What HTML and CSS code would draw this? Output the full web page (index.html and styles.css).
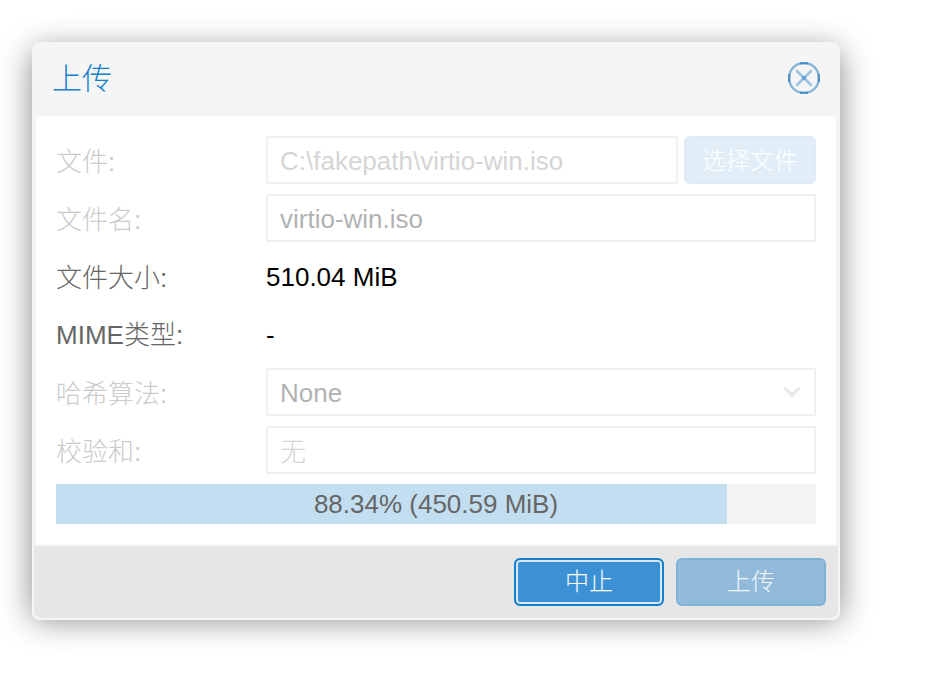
FILE: index.html
```html
<!DOCTYPE html>
<html lang="zh-CN">
<head>
<meta charset="utf-8">
<title>上传</title>
<link rel="stylesheet" href="styles.css">
</head>
<body>
<section class="window" role="dialog">
  <header class="header">
    <h1 class="title">上传</h1>
    <svg class="close" viewBox="0 0 32 32" fill="none"><circle cx="16" cy="16" r="15" stroke="#8ab6d8" stroke-width="2.6"/><path d="M12 1.2h8M12 30.8h8M1.2 12v8M30.8 12v8" stroke="#468fc5" stroke-width="2"/><path d="M9 9l14 14M23 9L9 23" stroke="#9cc2e4" stroke-width="2.6" stroke-linecap="round"/><path d="M14.5 14.5l3 3M17.5 14.5l-3 3" stroke="#5d9fd6" stroke-width="2"/></svg>
  </header>
  <main class="content">
    <div class="row disabled"><span class="label">文件:</span><span class="field faint">C:\fakepath\virtio-win.iso</span><span class="choose"><span class="caption">选择文件</span></span></div>
    <div class="row disabled"><span class="label">文件名:</span><span class="field">virtio-win.iso</span></div>
    <div class="row"><span class="label">文件大小:</span><span class="value">510.04 MiB</span></div>
    <div class="row"><span class="label mixed">MIME类型:</span><span class="value">-</span></div>
    <div class="row disabled"><span class="label">哈希算法:</span><span class="field">None<svg class="arrow" viewBox="0 0 18 12" fill="none"><path d="M1.5 1.5L9 9.3l7.5-7.8" stroke="#e8e8e8" stroke-width="3"/></svg></span></div>
    <div class="row disabled"><span class="label">校验和:</span><span class="field faint placeholder">无</span></div>
    <div class="progress"><div class="bar" style="width:88.34%"></div><span class="percent">88.34% (450.59 MiB)</span></div>
  </main>
  <footer class="footer">
    <button class="button focused"><span class="caption">中止</span></button>
    <button class="button inactive"><span class="caption">上传</span></button>
  </footer>
</section>
</body>
</html>
```
FILE: styles.css
```css
* { box-sizing: border-box; }
body {
  margin: 0;
  min-height: 100vh;
  padding: 42px 0 0 32px;
  background: #fff;
  font: 300 26px/30px "Liberation Sans", "Noto Sans CJK SC", sans-serif;
}
.window {
  position: relative;
  display: flex;
  flex-direction: column;
  width: 808px;
  height: 578px;
  border: 2px solid #f5f5f5;
  border-radius: 8px;
  background: #f5f5f5;
}
.window::before {
  content: "";
  position: absolute;
  z-index: -1;
  inset: 6px -2px -2px;
  border-radius: 8px;
  box-shadow: 0 0 32px #888;
}
.header {
  display: flex;
  align-items: center;
  justify-content: space-between;
  height: 72px;
  padding: 0 18px 4px;
}
.title { margin: 2px 0 0; color: #157fcc; font-size: 30px; font-weight: 300; line-height: 40px; }
.close { width: 32px; height: 32px; }
.content {
  display: flex;
  flex-direction: column;
  gap: 10px;
  height: 428px;
  margin: 0 2px 2px;
  padding: 20px;
  background: #fff;
}
.row { display: flex; height: 48px; align-items: center; white-space: nowrap; }
.label { width: 210px; color: #666; padding-top: 4px; }
.mixed { padding-top: 2px; }
.disabled .label { color: #cbcbcb; }
.value { padding-top: 2px; color: #000; }
.field {
  display: flex;
  flex: 1;
  align-items: center;
  justify-content: space-between;
  height: 48px;
  padding: 2px 12px 0;
  border: 2px solid #f0f0f0;
  color: #b2b2b2;
}
.faint { color: #d5d5d5; }
.placeholder { padding-top: 4px; }
.arrow { width: 18px; height: 12px; margin: -2px 1px 0 0; }
.choose {
  display: flex;
  align-items: center;
  justify-content: center;
  width: 132px;
  height: 48px;
  margin-left: 6px;
  padding-top: 1px;
  border: 2px solid #deebf6;
  border-radius: 6px;
  background: #e1edf7;
  color: #fff;
  font-size: 24px;
}
.progress { display: grid; height: 40px; background: #f5f5f5; }
.bar, .percent { grid-area: 1 / 1; }
.bar { background: #c3def1; }
.percent { color: #666; line-height: 40px; text-align: center; }
.footer {
  display: flex;
  justify-content: flex-end;
  gap: 12px;
  height: 72px;
  padding: 12px;
  border-radius: 0 0 6px 6px;
  background: #e6e6e6;
}
.button {
  width: 150px;
  height: 48px;
  padding: 0;
  border: 2px solid #157fcc;
  border-radius: 6px;
  color: #fff;
  font: inherit;
  font-size: 24px;
}
.focused { background: #3c91d4; box-shadow: inset 0 0 0 2px #d5e7f5; }
.inactive { border-color: #7eb2d9; background: #92bbdb; color: #f2f5f8; }
```
